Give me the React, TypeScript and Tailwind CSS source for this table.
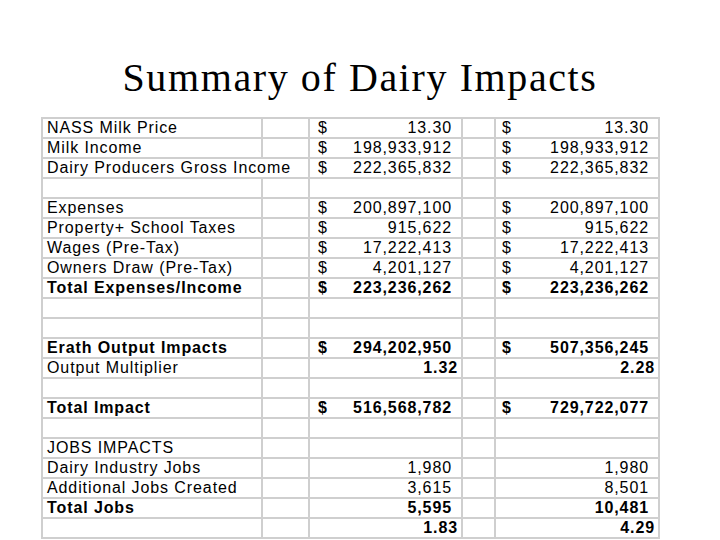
type Cell = {
  dollar?: boolean;
  value: string;
  plain?: boolean;
  bold?: boolean;
};

type Row = {
  label?: string;
  bold?: boolean;
  span?: boolean;
  c?: Cell;
  e?: Cell;
};

const rows: Row[] = [
  { label: 'NASS Milk Price', c: { dollar: true, value: '13.30' }, e: { dollar: true, value: '13.30' } },
  { label: 'Milk Income', c: { dollar: true, value: '198,933,912' }, e: { dollar: true, value: '198,933,912' } },
  { label: 'Dairy Producers Gross Income', span: true, c: { dollar: true, value: '222,365,832' }, e: { dollar: true, value: '222,365,832' } },
  {},
  { label: 'Expenses', c: { dollar: true, value: '200,897,100' }, e: { dollar: true, value: '200,897,100' } },
  { label: 'Property+ School Taxes', c: { dollar: true, value: '915,622' }, e: { dollar: true, value: '915,622' } },
  { label: 'Wages (Pre-Tax)', c: { dollar: true, value: '17,222,413' }, e: { dollar: true, value: '17,222,413' } },
  { label: 'Owners Draw (Pre-Tax)', c: { dollar: true, value: '4,201,127' }, e: { dollar: true, value: '4,201,127' } },
  { label: 'Total Expenses/Income', bold: true, c: { dollar: true, value: '223,236,262', bold: true }, e: { dollar: true, value: '223,236,262', bold: true } },
  {},
  {},
  { label: 'Erath Output Impacts', bold: true, c: { dollar: true, value: '294,202,950', bold: true }, e: { dollar: true, value: '507,356,245', bold: true } },
  { label: 'Output Multiplier', c: { value: '1.32', plain: true, bold: true }, e: { value: '2.28', plain: true, bold: true } },
  {},
  { label: 'Total Impact', bold: true, c: { dollar: true, value: '516,568,782', bold: true }, e: { dollar: true, value: '729,722,077', bold: true } },
  {},
  { label: 'JOBS IMPACTS' },
  { label: 'Dairy Industry Jobs', c: { value: '1,980' }, e: { value: '1,980' } },
  { label: 'Additional Jobs Created', c: { value: '3,615' }, e: { value: '8,501' } },
  { label: 'Total Jobs', bold: true, c: { value: '5,595', bold: true }, e: { value: '10,481', bold: true } },
  { c: { value: '1.83', plain: true, bold: true }, e: { value: '4.29', plain: true, bold: true } },
];

const td = 'border-2 border-[#cfcfcf] p-0 h-5 align-middle whitespace-nowrap';

function Money({ cell, left }: { cell?: Cell; left: string }) {
  if (!cell) return null;
  return (
    <div className={`flex justify-between ${left} ${cell.plain ? 'pr-[3px]' : 'pr-[9px]'} ${cell.bold ? 'font-bold' : ''}`}>
      <span>{cell.dollar ? '$' : ''}</span>
      <span>{cell.value}</span>
    </div>
  );
}

export default function App() {
  return (
    <div className="w-[720px] h-[540px] bg-white overflow-hidden text-black">
      <h1
        className="pt-[57px] text-center text-[40px] leading-[42px] tracking-[1.6px] font-normal"
        style={{ fontFamily: '"Liberation Serif", "Times New Roman", serif' }}
      >
        Summary of Dairy Impacts
      </h1>

      <table
        className="mt-[18px] ml-[41px] border-collapse table-fixed text-[16px] leading-[18px] tracking-[0.9px]"
        style={{ fontFamily: '"Liberation Sans", Arial, sans-serif' }}
      >
        <colgroup>
          <col className="w-[220px]" />
          <col className="w-[47px]" />
          <col className="w-[153px]" />
          <col className="w-[33px]" />
          <col className="w-[164px]" />
        </colgroup>
        <tbody>
          {rows.map((row, i) => (
            <tr key={i}>
              {row.span ? (
                <td colSpan={2} className={`${td} pl-[4px] ${row.bold ? 'font-bold' : ''}`}>
                  {row.label}
                </td>
              ) : (
                <>
                  <td className={`${td} pl-[4px] ${row.bold ? 'font-bold' : ''}`}>{row.label}</td>
                  <td className={td}></td>
                </>
              )}
              <td className={td}>
                <Money cell={row.c} left="pl-[8px]" />
              </td>
              <td className={td}></td>
              <td className={td}>
                <Money cell={row.e} left="pl-[6px]" />
              </td>
            </tr>
          ))}
        </tbody>
      </table>
    </div>
  );
}
